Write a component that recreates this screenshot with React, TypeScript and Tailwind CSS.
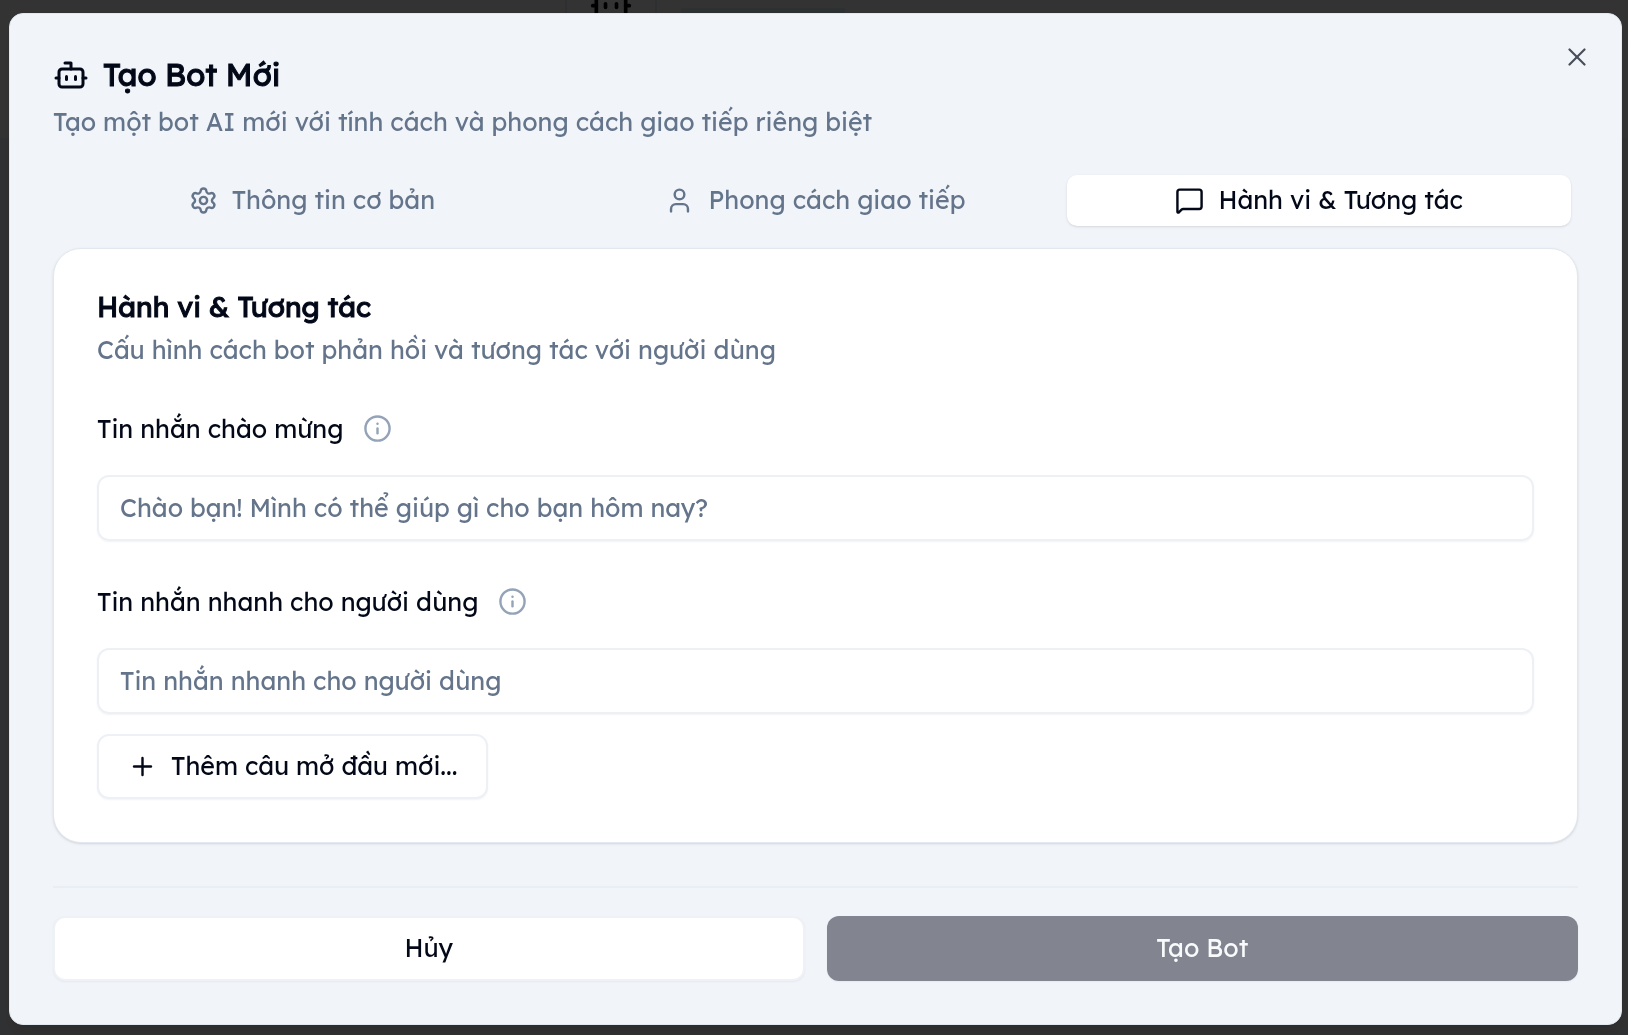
import React, { useState } from 'react';
import clsx from 'clsx';
import { Bot, Info, MessageSquare, Plus, Settings, User, X } from 'lucide-react';

const tabs = [
  { id: 'basic', label: 'Thông tin cơ bản', icon: Settings },
  { id: 'style', label: 'Phong cách giao tiếp', icon: User },
  { id: 'behavior', label: 'Hành vi & Tương tác', icon: MessageSquare },
];

interface FieldProps {
  id: string;
  label: string;
  placeholder: string;
}

const Field: React.FC<FieldProps> = ({ id, label, placeholder }) => (
  <div>
    <div className="flex items-center gap-5 leading-9">
      <label htmlFor={id}>{label}</label>
      <button type="button" aria-label="Info" className="text-[#94a3b8]">
        <Info className="size-[29px]" />
      </button>
    </div>
    <input
      id={id}
      type="text"
      placeholder={placeholder}
      className="mt-7 h-[66px] w-full rounded-xl border-2 border-[#edf1f6] bg-transparent px-[21px] shadow-xs placeholder:text-[#64748b]"
    />
  </div>
);

// Page that stays behind the overlay
const Backdrop: React.FC = () => (
  <div aria-hidden="true" className="min-h-screen bg-slate-100">
    <div className="flex h-[138px] bg-white pl-[565px]">
      <div className="flex h-13 w-[92px] justify-center border-x-2 border-slate-200">
        <Bot className="-mt-5 size-11 text-black" />
      </div>
      <div className="mt-2 ml-6 h-8 w-[164px] bg-[#dff3f3]" />
    </div>
  </div>
);

const App: React.FC = () => {
  const [activeTab, setActiveTab] = useState('behavior');

  return (
    <div className="font-['Lexend','Inter',sans-serif] text-[25px] text-[#020817]">
      <Backdrop />
      <div className="fixed inset-0 flex items-center bg-black/80 pt-0.5 pr-[6px] pl-[9px]">
        <div
          role="dialog"
          aria-labelledby="dialog-title"
          className="relative w-full rounded-[14px] border border-slate-200 bg-[#f1f5f9] p-[43px] shadow-lg"
        >
          <button
            type="button"
            aria-label="Close"
            className="absolute top-7 right-[29px] opacity-70"
          >
            <X className="size-[30px]" strokeWidth={1.75} />
          </button>

          <header>
            <h2
              id="dialog-title"
              className="flex items-center gap-[14px] text-[31px] leading-9 font-normal"
            >
              <Bot className="size-9" />
              <span className="[-webkit-text-stroke:1px]">Tạo Bot Mới</span>
            </h2>
            <p className="mt-[11px] leading-9 text-[#64748b]">
              Tạo một bot AI mới với tính cách và phong cách giao tiếp riêng biệt
            </p>
          </header>

          <div role="tablist" className="mt-7 grid grid-cols-3 p-[7px]">
            {tabs.map(({ id, label, icon: Icon }) => (
              <button
                key={id}
                type="button"
                role="tab"
                aria-selected={activeTab === id}
                onClick={() => setActiveTab(id)}
                className={clsx(
                  'flex h-[51px] items-center justify-center gap-[14px] rounded-[10px]',
                  activeTab === id ? 'bg-white shadow' : 'text-[#64748b]'
                )}
              >
                <Icon className="size-[29px]" />
                {label}
              </button>
            ))}
          </div>

          <section className="mt-[15px] rounded-[28px] border border-slate-200 bg-white p-[43px] shadow">
            <h3 className="text-[28px] leading-[30px] font-normal [-webkit-text-stroke:1px]">
              Hành vi & Tương tác
            </h3>
            <p className="mt-[10px] leading-9 text-[#64748b]">
              Cấu hình cách bot phản hồi và tương tác với người dùng
            </p>
            <div className="mt-[43px] flex flex-col gap-[43px]">
              <Field
                id="welcome"
                label="Tin nhắn chào mừng"
                placeholder="Chào bạn! Mình có thể giúp gì cho bạn hôm nay?"
              />
              <Field
                id="quick"
                label="Tin nhắn nhanh cho người dùng"
                placeholder="Tin nhắn nhanh cho người dùng"
              />
            </div>
            <button
              type="button"
              className="mt-5 flex h-[65px] items-center gap-[14px] rounded-xl border-2 border-[#edf1f6] bg-white px-[29px] shadow-xs"
            >
              <Plus className="size-[29px]" />
              Thêm câu mở đầu mới...
            </button>
          </section>

          <footer className="mt-[43px] grid grid-cols-2 gap-[22px] border-t-2 border-slate-200/50 pt-7">
            <button type="button" className="h-[65px] rounded-xl border-2 border-slate-200/60 bg-white shadow-xs">
              Hủy
            </button>
            <button type="button" disabled className="h-[65px] rounded-xl bg-[#828590] text-slate-50 shadow-xs">
              Tạo Bot
            </button>
          </footer>
        </div>
      </div>
    </div>
  );
};

export default App;
